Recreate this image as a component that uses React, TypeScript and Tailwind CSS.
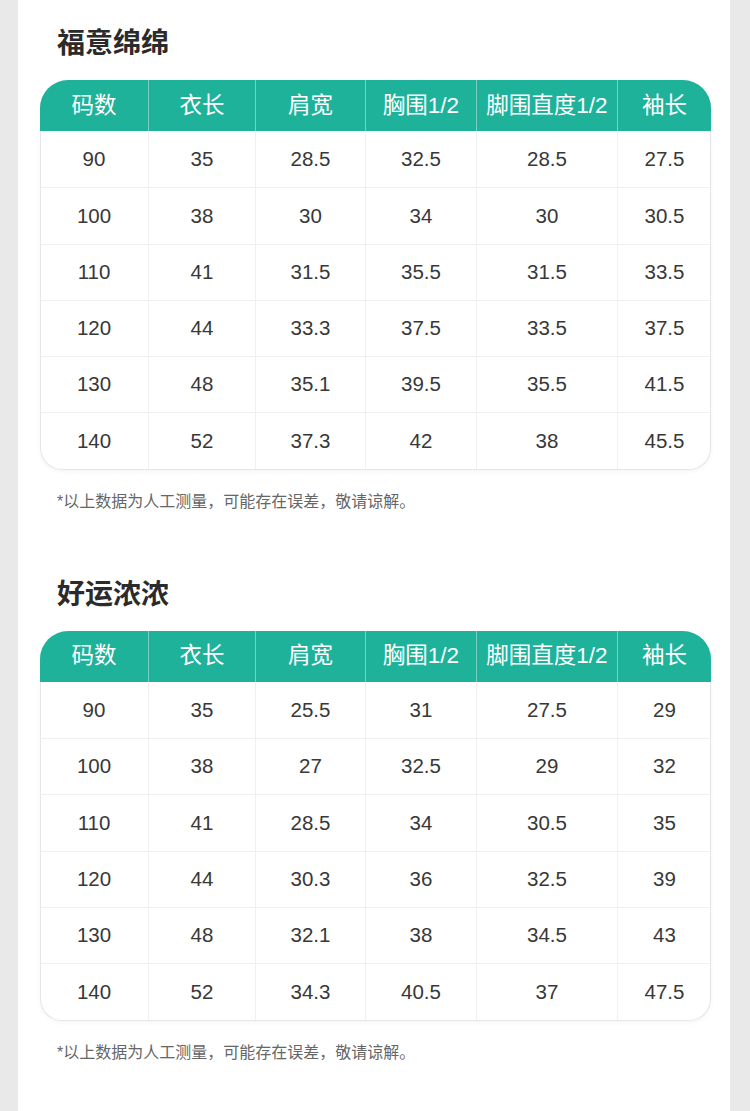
const columns = ['码数', '衣长', '肩宽', '胸围1/2', '脚围直度1/2', '袖长'];

type SizeTable = {
  title: string;
  rows: string[][];
};

const tables: SizeTable[] = [
  {
    title: '福意绵绵',
    rows: [
      ['90', '35', '28.5', '32.5', '28.5', '27.5'],
      ['100', '38', '30', '34', '30', '30.5'],
      ['110', '41', '31.5', '35.5', '31.5', '33.5'],
      ['120', '44', '33.3', '37.5', '33.5', '37.5'],
      ['130', '48', '35.1', '39.5', '35.5', '41.5'],
      ['140', '52', '37.3', '42', '38', '45.5'],
    ],
  },
  {
    title: '好运浓浓',
    rows: [
      ['90', '35', '25.5', '31', '27.5', '29'],
      ['100', '38', '27', '32.5', '29', '32'],
      ['110', '41', '28.5', '34', '30.5', '35'],
      ['120', '44', '30.3', '36', '32.5', '39'],
      ['130', '48', '32.1', '38', '34.5', '43'],
      ['140', '52', '34.3', '40.5', '37', '47.5'],
    ],
  },
];

const gridCols = 'grid grid-cols-[108px_107px_110px_111px_141px_94px]';

function SizeChart({ title, rows }: SizeTable) {
  return (
    <section>
      <h2 className="pl-[39px] text-[28px] leading-[36px] font-semibold text-[#2b2b2b]">{title}</h2>

      <div className="mt-[18px] ml-[22px] w-[671px]">
        <div className={`${gridCols} h-[51px] rounded-t-[28px] bg-[#1eb29b]`}>
          {columns.map((col, i) => (
            <div
              key={col}
              className={`flex items-center justify-center text-[22.5px] text-white ${
                i > 0 ? 'border-l border-white/40' : ''
              }`}
            >
              {col}
            </div>
          ))}
        </div>

        <div className="rounded-b-[22px] border border-t-0 border-[#e6e6e6] bg-white shadow-[0_2px_4px_rgba(0,0,0,0.04)]">
          {rows.map((row, r) => (
            <div
              key={row[0]}
              className={`${gridCols} -ml-px h-[56.3px] ${r > 0 ? 'border-t border-[#f0f0f0]' : ''}`}
            >
              {row.map((cell, i) => (
                <div
                  key={i}
                  className={`flex items-center justify-center text-[20.5px] text-[#383838] ${
                    i > 0 ? 'border-l border-[#f0f0f0]' : ''
                  }`}
                >
                  {cell}
                </div>
              ))}
            </div>
          ))}
        </div>
      </div>

      <p className="mt-[22px] pl-[39px] text-[16px] leading-[20px] text-[#666]">
        *以上数据为人工测量，可能存在误差，敬请谅解。
      </p>
    </section>
  );
}

export default function App() {
  return (
    <div
      className="min-h-[1111px] bg-[#e9e9e9] px-[18px]"
      style={{ fontFamily: '"Liberation Sans", "Noto Sans CJK SC", sans-serif' }}
    >
      <div className="flex min-h-[1111px] w-[712px] flex-col gap-[65px] bg-white pt-[26px]">
        {tables.map((t) => (
          <SizeChart key={t.title} {...t} />
        ))}
      </div>
    </div>
  );
}
